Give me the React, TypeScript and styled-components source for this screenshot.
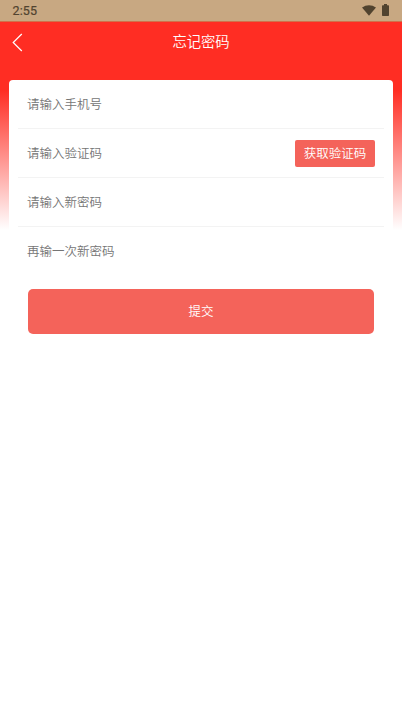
import React from "react";
import styled, { createGlobalStyle } from "styled-components";

const GlobalStyle = createGlobalStyle`
  * { box-sizing: border-box; }
  body {
    margin: 0;
    background: #fff;
    font-family: "Noto Sans CJK SC", "Noto Sans", sans-serif;
  }
`;

const Screen = styled.div`
  min-height: 716px;
  background: #fff linear-gradient(#ff2d23 0 90px, #fff 230px) no-repeat;
`;

const StatusBar = styled.div`
  display: flex;
  align-items: center;
  justify-content: space-between;
  height: 22px;
  padding: 0 13px 0 12.5px;
  background: #c8a882;
  border-bottom: 1px solid #d0714b;
  color: #51432f;
`;

const Clock = styled.span`
  padding-top: 1px;
  font: 400 12.5px/20px Roboto, sans-serif;
  letter-spacing: 0.1px;
  -webkit-text-stroke: 0.2px currentColor;
`;

const StatusIcons = styled.div`
  display: flex;
  align-items: center;
  gap: 6px;
  padding-bottom: 1px;
  svg { display: block; }
`;

const Header = styled.header`
  display: grid;
  grid-template-columns: 40px 1fr 40px;
  align-items: center;
  height: 40px;
`;

const BackButton = styled.button`
  display: flex;
  padding: 0 0 0 12px;
  border: 0;
  background: none;
`;

const Title = styled.h1`
  margin: 0 0 2px;
  color: #fff;
  font-size: 14.3px;
  font-weight: 350;
  line-height: 20px;
  text-align: center;
`;

const Card = styled.form`
  margin: 18px 9px 0;
  padding: 0 9px;
  border-radius: 4px;
  background: #fff;
`;

const Field = styled.div<{ $last?: boolean }>`
  display: flex;
  align-items: center;
  height: 49px;
  padding: 0 9px;
  border-bottom: 1px solid ${(p) => (p.$last ? "transparent" : "#f3f3f3")};
`;

const Input = styled.input`
  flex: 1;
  min-width: 0;
  height: 28px;
  margin-bottom: 2px;
  padding: 0;
  border: 0;
  outline: 0;
  background: none;
  color: #333;
  font: 350 12.5px/20px "Noto Sans CJK SC", sans-serif;
  &::placeholder { color: #757575; opacity: 1; }
`;

const CodeButton = styled.button`
  width: 80px;
  height: 27px;
  margin-top: 1px;
  padding: 0 0 1px;
  border: 0;
  border-radius: 2px;
  background: #f4635a;
  color: #fff;
  font: 350 12.5px/20px "Noto Sans CJK SC", sans-serif;
`;

const SubmitButton = styled.button`
  display: block;
  width: calc(100% - 20px);
  height: 45px;
  margin: 13px 10px 0;
  padding: 0 0 2px;
  border: 0;
  border-radius: 5px;
  background: #f4635a;
  color: #fff;
  font: 350 12.5px/20px "Noto Sans CJK SC", sans-serif;
`;

const fields = [
  { placeholder: "请输入手机号", type: "tel" },
  { placeholder: "请输入验证码", type: "text", action: "获取验证码" },
  { placeholder: "请输入新密码", type: "password" },
  { placeholder: "再输一次新密码", type: "password" },
];

export default function App() {
  return (
    <Screen>
      <GlobalStyle />
      <StatusBar>
        <Clock>2:55</Clock>
        <StatusIcons>
          <svg width="14" height="12" viewBox="0 0 14 12">
            <path d="M0 3.6C4 .3 10 .3 14 3.6L7 11.8Z" fill="currentColor" />
          </svg>
          <svg width="7" height="12" viewBox="0 0 7 12">
            <path d="M2 0h3v1.2h1.3q.7 0 .7.7V11.3q0 .7-.7.7H.7Q0 12 0 11.3V1.9q0-.7.7-.7H2Z" fill="currentColor" />
          </svg>
        </StatusIcons>
      </StatusBar>
      <Header>
        <BackButton type="button" aria-label="返回">
          <svg width="11" height="19" viewBox="0 0 11 19" fill="none">
            <path d="M9.8 1 1.2 9.5 9.8 18" stroke="#fff" strokeWidth="1.2" />
          </svg>
        </BackButton>
        <Title>忘记密码</Title>
      </Header>
      <Card onSubmit={(e) => e.preventDefault()}>
        {fields.map((f, i) => (
          <Field key={f.placeholder} $last={i === fields.length - 1}>
            <Input type={f.type} placeholder={f.placeholder} />
            {f.action && <CodeButton type="button">{f.action}</CodeButton>}
          </Field>
        ))}
        <SubmitButton type="submit">提交</SubmitButton>
      </Card>
    </Screen>
  );
}
